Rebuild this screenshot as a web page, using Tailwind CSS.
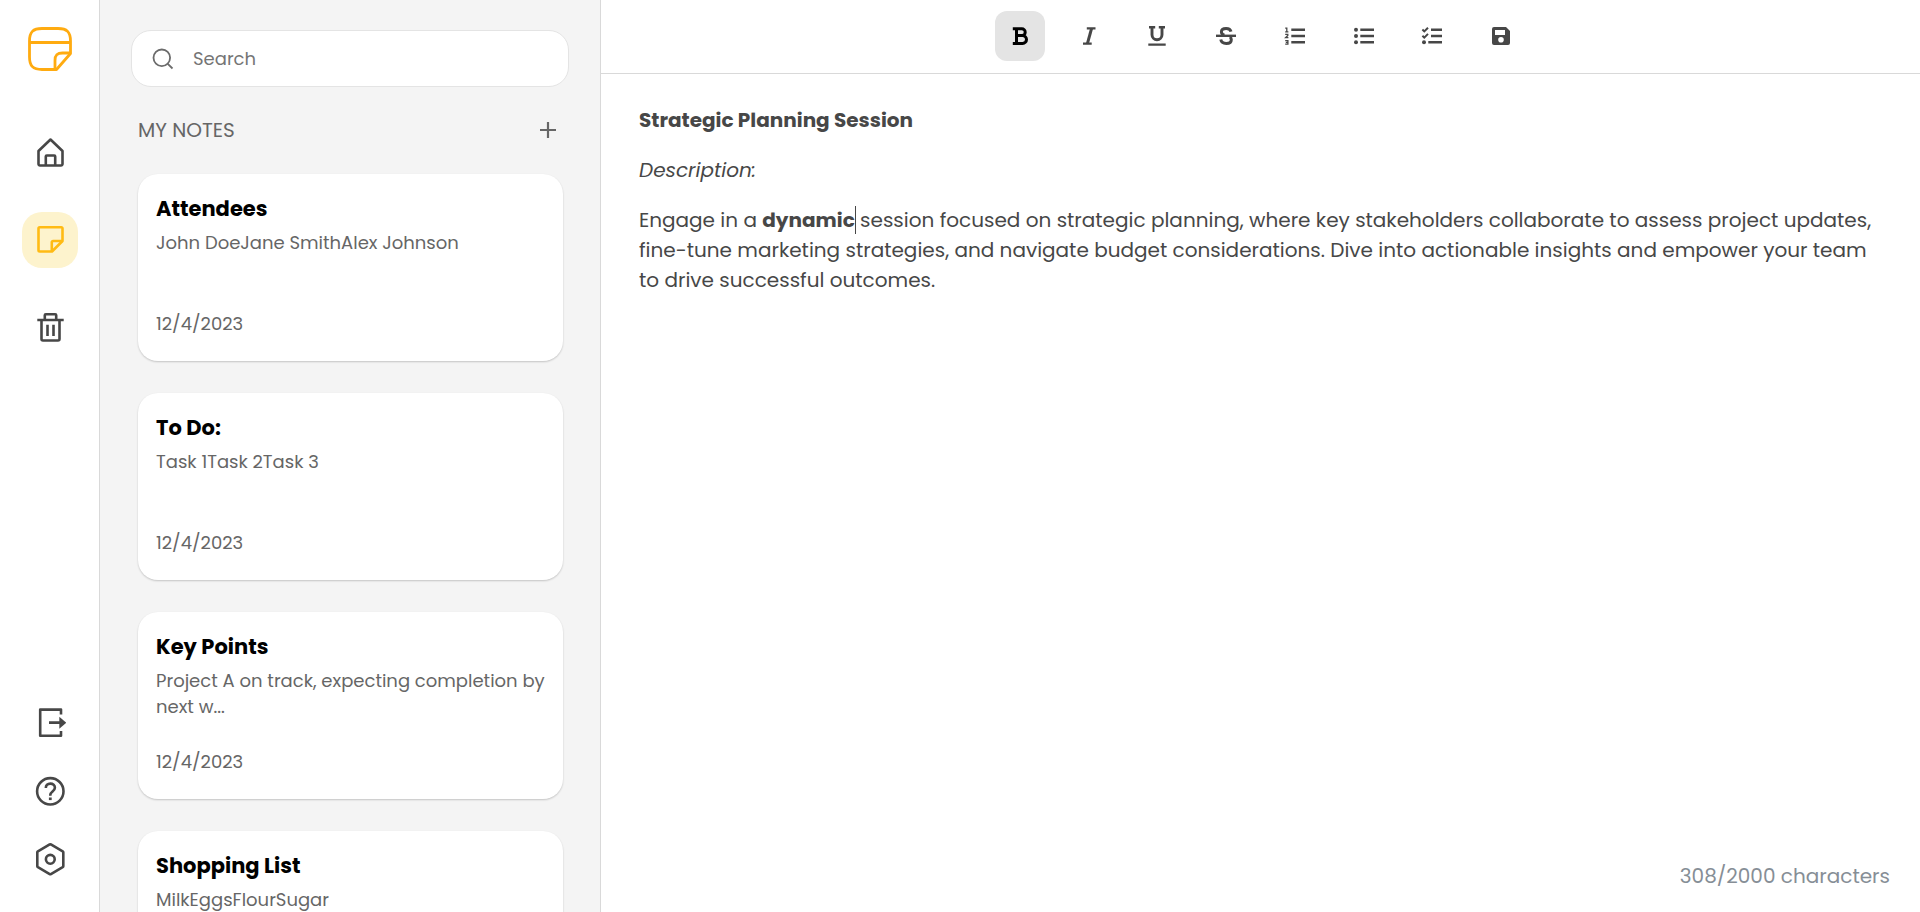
<!DOCTYPE html>
<html lang="en">
<head>
<meta charset="utf-8">
<meta name="viewport" content="width=device-width, initial-scale=1">
<title>Notes</title>
<script src="https://cdn.jsdelivr.net/npm/@tailwindcss/browser@4"></script>
</head>
<body class="flex h-screen overflow-hidden bg-white font-[Poppins,Inter,sans-serif] text-[#495057]">

<!-- Navigation rail -->
<nav aria-label="Main" class="flex w-[100px] shrink-0 flex-col items-center border-r border-[#d9d9d9] bg-white pt-[27px] pb-[25px] pl-px text-[#474747]">
  <a href="#" aria-label="Notes home page" class="text-[#ffab10]">
    <svg class="size-11" viewBox="0 0 44 44" fill="none" stroke="currentColor" stroke-width="2.8" stroke-linejoin="round"><path d="M42.5 26.5V14C42.5 5 39 1.5 30 1.5H14C5 1.5 1.5 5 1.5 14v16c0 9 3.5 12.5 12.5 12.5h14.5z"/><path d="M1.5 15.5h41M42 26h-7.500c-5.500 0-7.500 2-7.500 7.500v9"/></svg>
  </a>
  <div class="mt-[53px] flex flex-col gap-8">
    <button aria-label="Home" class="grid size-14 place-items-center rounded-[20px]">
      <svg class="size-8" viewBox="0 0 32 32" fill="none" stroke="currentColor" stroke-width="2.6" stroke-linejoin="round"><path d="M16.500 3.500 4.500 15v13a1.500 1.500 0 0 0 1.500 1.500h21a1.500 1.500 0 0 0 1.500-1.500V15z"/><path d="M11.800 29.500v-9a1 1 0 0 1 1-1h7.400a1 1 0 0 1 1 1v9"/></svg>
    </button>
    <button aria-label="Notes" aria-current="page" class="grid size-14 place-items-center rounded-[20px] bg-[#fdf3cd] text-[#ffbb14]">
      <svg class="size-8" viewBox="0 0 32 32" fill="none" stroke="currentColor" stroke-width="2.6" stroke-linejoin="round"><path d="M28.500 17V4.500A1.200 1.200 0 0 0 27.300 3.300H5.700A1.200 1.200 0 0 0 4.500 4.500v21.800a1.200 1.200 0 0 0 1.200 1.200H18z"/><path d="M28.500 17h-9.500a1.200 1.200 0 0 0-1.200 1.200v9.300"/></svg>
    </button>
    <button aria-label="Trash" class="grid size-14 place-items-center rounded-[20px]">
      <svg class="size-8" viewBox="0 0 32 32" fill="none" stroke="currentColor" stroke-width="2.6" stroke-linejoin="round"><path d="M3.300 8h26.400M10.800 8V3.300a1 1 0 0 1 1-1h9.400a1 1 0 0 1 1 1V8M7.500 8v19a1.500 1.500 0 0 0 1.500 1.500h15a1.500 1.500 0 0 0 1.500-1.500V8M13.500 12.700V24M19.500 12.700V24"/></svg>
    </button>
  </div>
  <div class="mt-auto flex flex-col gap-3">
    <button aria-label="Log out" class="grid size-14 place-items-center">
      <svg class="size-8" viewBox="0 0 32 32" fill="none" stroke="currentColor" stroke-width="2.6" stroke-linejoin="round"><path d="M27 7.500V2.600H6.200v26.200H27V24M15 15.600h12"/><path d="M25.300 9.800v12l7-6z" fill="currentColor" stroke="none"/></svg>
    </button>
    <button aria-label="Help" class="grid size-14 place-items-center">
      <svg class="size-8" viewBox="0 0 32 32" fill="none" stroke="currentColor" stroke-width="2.6"><circle cx="16.300" cy="16.300" r="13.200"/><path d="M11.800 12.900c0-2.600 1.800-4.300 4.500-4.300s4.600 1.700 4.600 4.100c0 3.600-4.600 3.900-4.600 7.300v.8"/><path d="M16.300 22.500v2.600" stroke-width="2.8"/></svg>
    </button>
    <button aria-label="Settings" class="grid size-14 place-items-center">
      <svg class="size-8 overflow-visible" viewBox="0 0 32 32" fill="none" stroke="currentColor" stroke-width="2.6" stroke-linejoin="round"><path d="M15.700 1.400 3.900 8.300a1.200 1.200 0 0 0-.6 1V23.200a1.200 1.200 0 0 0 .6 1l11.800 6.900a1.200 1.200 0 0 0 1.200 0l11.800-6.900a1.200 1.200 0 0 0 .6-1V9.300a1.200 1.200 0 0 0-.6-1L16.900 1.400a1.200 1.200 0 0 0-1.200 0z"/><circle cx="16.300" cy="16.300" r="4.400"/></svg>
    </button>
  </div>
</nav>

<!-- Notes list -->
<aside class="flex w-[501px] shrink-0 flex-col overflow-hidden border-r border-[#d9d9d9] bg-[#f4f4f4] px-[31px] pt-[30px]">
  <div class="flex h-[57px] shrink-0 items-center gap-[19px] rounded-[20px] border border-[#e4e4e4] bg-white px-5 text-[#6b6b6b]">
    <svg class="size-[22px] shrink-0" viewBox="0 0 22 22" fill="none" stroke="currentColor" stroke-width="1.8"><circle cx="9.800" cy="9.800" r="8.300"/><path d="m15.800 15.800 4.700 4.700"/></svg>
    <input type="search" aria-label="Search" placeholder="Search" class="h-full min-w-0 flex-1 bg-transparent text-[18px] outline-none placeholder:text-[#757575]">
  </div>
  <div class="mt-7 flex shrink-0 items-center justify-between pr-3 pl-[7px] text-[#666]">
    <h1 class="text-[20px] leading-[30px]">MY NOTES</h1>
    <button aria-label="Add note" class="grid size-[18px] place-items-center">
      <svg class="size-[18px]" viewBox="0 0 18 18" fill="none" stroke="currentColor" stroke-width="2.2"><path d="M9 1v16M1 9h16"/></svg>
    </button>
  </div>
  <div class="mt-[29px] flex flex-col gap-8 pr-1.5 pl-[7px] text-[18px] leading-[26px] text-[#666]">
    <article class="flex h-[187px] shrink-0 flex-col rounded-[20px] bg-white pr-3 pl-[18px] pt-[19px] pb-6 shadow-[0_1px_2px_rgba(0,0,0,0.2)]">
      <h2 class="mb-[5px] text-[21px] leading-8 font-bold text-black">Attendees</h2>
      <p>John DoeJane SmithAlex Johnson</p>
      <time class="mt-auto" datetime="2023-12-04">12/4/2023</time>
    </article>
    <article class="flex h-[187px] shrink-0 flex-col rounded-[20px] bg-white pr-3 pl-[18px] pt-[19px] pb-6 shadow-[0_1px_2px_rgba(0,0,0,0.2)]">
      <h2 class="mb-[5px] text-[21px] leading-8 font-bold text-black">To Do:</h2>
      <p>Task 1Task 2Task 3</p>
      <time class="mt-auto" datetime="2023-12-04">12/4/2023</time>
    </article>
    <article class="flex h-[187px] shrink-0 flex-col rounded-[20px] bg-white pr-3 pl-[18px] pt-[19px] pb-6 shadow-[0_1px_2px_rgba(0,0,0,0.2)]">
      <h2 class="mb-[5px] text-[21px] leading-8 font-bold text-black">Key Points</h2>
      <p>Project A on track, expecting completion by next w...</p>
      <time class="mt-auto" datetime="2023-12-04">12/4/2023</time>
    </article>
    <article class="flex h-[187px] shrink-0 flex-col rounded-[20px] bg-white pr-3 pl-[18px] pt-[19px] pb-6 shadow-[0_1px_2px_rgba(0,0,0,0.2)]">
      <h2 class="mb-[5px] text-[21px] leading-8 font-bold text-black">Shopping List</h2>
      <p>MilkEggsFlourSugar</p>
      <time class="mt-auto" datetime="2023-12-04">12/4/2023</time>
    </article>
  </div>
</aside>

<!-- Editor -->
<main class="flex min-w-0 flex-1 flex-col">
  <div role="toolbar" aria-label="Formatting" class="flex h-[74px] shrink-0 justify-center border-b border-[#d9d9d9] pt-[11px] text-[#474747]">
    <div class="flex w-[531px] justify-between">
      <button aria-label="Bold" aria-pressed="true" class="grid size-[50px] place-items-center rounded-xl bg-[#e4e4e4] text-black">
        <svg class="size-6" viewBox="0 0 24 24" fill="none" stroke="currentColor" stroke-width="3"><path d="M4.800 4.800h9a3.400 3.400 0 0 1 0 6.800H9M8.500 4.800v14.600M4.800 19.400h9.800a3.900 3.900 0 0 0 0-7.800H9"/></svg>
      </button>
      <button aria-label="Italic" class="grid size-[50px] place-items-center rounded-xl">
        <svg class="size-6" viewBox="0 0 24 24" fill="none" stroke="currentColor" stroke-width="2.4"><path d="M9.800 4.400h8.700M6 19.600h8.700"/><path d="M14.600 4.400l-4.200 15.200" stroke-width="3"/></svg>
      </button>
      <button aria-label="Underline" class="grid size-[50px] place-items-center rounded-xl">
        <svg class="size-6" viewBox="0 0 24 24" fill="none" stroke="currentColor" stroke-width="2.4"><path d="M4 3.200h6.200M13.800 3.200H20M3.300 20.600h17.400"/><path d="M7 3.200v7.600a5 5 0 0 0 10 0V3.200" stroke-width="2.9"/></svg>
      </button>
      <button aria-label="Strikethrough" class="grid size-[50px] place-items-center rounded-xl">
        <svg class="size-6" viewBox="0 0 24 24" fill="none" stroke="currentColor" stroke-width="3"><path d="M17 7.600c-.5-2-2.300-3.200-4.900-3.200-2.900 0-4.700 1.300-4.700 3.300 0 1.700 1 2.800 3 3.400M6.800 15.600c.4 2.500 2.500 3.900 5.500 3.900s5-1.400 5-3.700c0-1.200-.4-2.200-1.300-3"/><path d="M2 11.800h20" stroke-width="2.4"/></svg>
      </button>
      <button aria-label="Numbered list" class="grid size-[50px] place-items-center rounded-xl">
        <svg class="size-6" viewBox="0 0 24 24" fill="none" stroke="currentColor" stroke-width="2.4"><path d="M8.300 5.800H22M8.300 12H22M8.300 18.200H22"/><path d="M2.200 4.200h1.600v3.600M2.200 7.800h3.200M2.200 10.300h2.600v1.200l-2.200 2.200h2.800M2.200 16.600h2.700v3.600H2.200M2.800 18.400h2" stroke-width="1.3"/></svg>
      </button>
      <button aria-label="Bulleted list" class="grid size-[50px] place-items-center rounded-xl">
        <svg class="size-6" viewBox="0 0 24 24" fill="none" stroke="currentColor" stroke-width="2.4"><path d="M8.300 5.800H22M8.300 12H22M8.300 18.200H22"/><g fill="currentColor" stroke="none"><circle cx="4" cy="5.800" r="2"/><circle cx="4" cy="12" r="2"/><circle cx="4" cy="18.200" r="2"/></g></svg>
      </button>
      <button aria-label="Checklist" class="grid size-[50px] place-items-center rounded-xl">
        <svg class="size-6" viewBox="0 0 24 24" fill="none" stroke="currentColor" stroke-width="2.4"><path d="M11 5.800h11M11 12h11M8.300 18.200H22"/><path d="m2.400 5.500 1.900 1.900 3.700-3.700M2.400 11.700l1.900 1.900L8 9.900" stroke-width="2"/><circle cx="4" cy="18.200" r="2" fill="currentColor" stroke="none"/></svg>
      </button>
      <button aria-label="Save" class="grid size-[50px] place-items-center rounded-xl">
        <svg class="size-6" viewBox="0 0 24 24" fill="currentColor"><path fill-rule="evenodd" d="M5 3h12l4 4v12a2 2 0 0 1-2 2H5a2 2 0 0 1-2-2V5a2 2 0 0 1 2-2zm1 3v5h10V6zm6 7a2.800 2.800 0 1 0 0 5.600 2.800 2.800 0 0 0 0-5.600z"/></svg>
      </button>
    </div>
  </div>
  <div role="textbox" aria-label="Note text" aria-multiline="true" contenteditable="true" spellcheck="false" class="flex flex-1 flex-col gap-5 px-[38px] pt-[31px] text-[20px] leading-[30px] text-[#474747] outline-none">
    <p><strong>Strategic Planning Session</strong></p>
    <p><em>Description:</em></p>
    <p>Engage in a <strong class="relative">dynamic<span class="absolute inset-y-0 -right-px w-px bg-[#474747]"></span></strong> session focused on strategic planning, where key stakeholders collaborate to assess project updates, fine-tune marketing strategies, and navigate budget considerations. Dive into actionable insights and empower your team to drive successful outcomes.</p>
  </div>
  <p class="pr-[30px] pb-[21px] text-right text-[20px] leading-[30px] text-[#868e96]">308/2000 characters</p>
</main>
</body>
</html>
